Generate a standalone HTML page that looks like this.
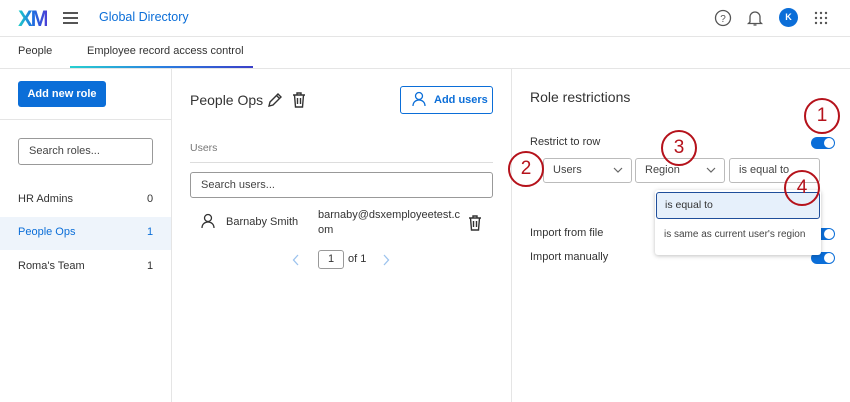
<!DOCTYPE html>
<html><head><style>
*{box-sizing:border-box;margin:0;padding:0}
body{width:850px;height:402px;overflow:hidden;background:#fff;font-family:"Liberation Sans",sans-serif;color:#333;position:relative;font-size:11px}
.a{position:absolute}
.inp{position:absolute;border:1px solid #999;border-radius:3px;background:#fff;color:#444}
.tog{position:absolute;width:24px;height:12px;border-radius:6px;background:#0b6ed8}
.tog:after{content:"";position:absolute;right:1px;top:1px;width:10px;height:10px;border-radius:50%;background:#fff}
.circ{position:absolute;width:36px;height:36px;border:2.5px solid #b5121b;border-radius:50%;background:transparent;color:#b5121b;font-size:19px;text-align:center;line-height:31px}
.sel{position:absolute;top:158px;height:25px;border:1px solid #bbb;border-radius:3px;background:#fff;font-size:11px;line-height:23px;padding-left:9px;color:#444}
.chev{position:absolute;right:8px;top:8px}
</style></head><body>
<div class="a" style="left:18px;top:6px;font-size:22px;font-weight:bold;letter-spacing:-2px;background:linear-gradient(90deg,#1fd1c8,#1d6fe0,#4b3fd6);-webkit-background-clip:text;color:transparent">XM</div>
<div class="a" style="left:63px;top:12px;width:15px;height:2px;background:#555;box-shadow:0 5px 0 #555,0 10px 0 #555"></div>
<div class="a" style="left:99px;top:10px;font-size:12.5px;color:#0b6ed8">Global Directory</div>
<svg class="a" style="left:714px;top:9px" width="18" height="18"><circle cx="9" cy="9" r="7.5" fill="none" stroke="#555" stroke-width="1.3"/><text x="9" y="13" font-size="10" text-anchor="middle" fill="#555" font-family="Liberation Sans">?</text></svg>
<svg class="a" style="left:746px;top:8px" width="18" height="20"><path d="M4 14V9a5 5 0 0 1 10 0v5l1.5 1.5h-13z M7.5 17h3" fill="none" stroke="#555" stroke-width="1.3"/></svg>
<div class="a" style="left:779px;top:8px;width:19px;height:19px;border-radius:50%;background:#0b6ed8;color:#fff;font-size:9px;font-weight:bold;text-align:center;line-height:19px">K</div>
<svg class="a" style="left:814px;top:11px" width="16" height="16" fill="#555"><circle cx="2" cy="2" r="1.2"/><circle cx="7" cy="2" r="1.2"/><circle cx="12" cy="2" r="1.2"/><circle cx="2" cy="7" r="1.2"/><circle cx="7" cy="7" r="1.2"/><circle cx="12" cy="7" r="1.2"/><circle cx="2" cy="12" r="1.2"/><circle cx="7" cy="12" r="1.2"/><circle cx="12" cy="12" r="1.2"/></svg>
<div class="a" style="left:0;top:36px;width:850px;height:1px;background:#e5e5e5"></div>
<div class="a" style="left:18px;top:45px;font-size:11px">People</div>
<div class="a" style="left:87px;top:45px;font-size:11px">Employee record access control</div>
<div class="a" style="left:70px;top:66px;width:183px;height:2px;background:linear-gradient(90deg,#27d0d0,#2a7fe0,#3a3fc8)"></div>
<div class="a" style="left:0;top:68px;width:850px;height:1px;background:#e5e5e5"></div>
<div class="a" style="left:171px;top:68px;width:1px;height:334px;background:#e5e5e5"></div>
<div class="a" style="left:511px;top:68px;width:1px;height:334px;background:#e5e5e5"></div>
<!-- left -->
<div class="a" style="left:18px;top:81px;width:88px;height:26px;background:#0b6ed8;border-radius:3px;color:#fff;font-size:11px;font-weight:bold;text-align:center;line-height:26px">Add new role</div>
<div class="a" style="left:0;top:119px;width:171px;height:1px;background:#e5e5e5"></div>
<div class="inp" style="left:18px;top:138px;width:135px;height:27px;padding-left:10px;line-height:25px;font-size:11px">Search roles...</div>
<div class="a" style="left:18px;top:193px">HR Admins</div><div class="a" style="left:147px;top:193px">0</div>
<div class="a" style="left:0;top:217px;width:171px;height:33px;background:#eef4fb"></div>
<div class="a" style="left:18px;top:226px;color:#0b6ed8">People Ops</div><div class="a" style="left:147px;top:226px;color:#0b6ed8">1</div>
<div class="a" style="left:18px;top:260px">Roma's Team</div><div class="a" style="left:147px;top:260px">1</div>
<!-- middle -->
<div class="a" style="left:190px;top:92px;font-size:14px;color:#333">People Ops</div>
<svg class="a" style="left:266px;top:91px" width="18" height="18"><path d="M3 15l1-4 8-8 3 3-8 8z M10.5 4.5l3 3" fill="none" stroke="#333" stroke-width="1.4"/></svg>
<svg class="a" style="left:291px;top:91px" width="16" height="18"><path d="M2 4h12 M6 4V2h4v2 M3.5 4l1 12h7l1-12 M6.5 7v6 M9.5 7v6" fill="none" stroke="#333" stroke-width="1.4"/></svg>
<div class="a" style="left:400px;top:86px;width:93px;height:28px;border:1px solid #0b6ed8;border-radius:3px;color:#0b6ed8;font-size:11px;font-weight:bold;line-height:26px;padding-left:33px">Add users</div>
<svg class="a" style="left:411px;top:91px" width="16" height="16"><circle cx="8" cy="5" r="3.5" fill="none" stroke="#0b6ed8" stroke-width="1.3"/><path d="M2 15c0-4 3-6 6-6s6 2 6 6" fill="none" stroke="#0b6ed8" stroke-width="1.3"/></svg>
<div class="a" style="left:190px;top:142px;font-size:10.5px;color:#777">Users</div>
<div class="a" style="left:190px;top:162px;width:303px;height:1px;background:#ddd"></div>
<div class="inp" style="left:190px;top:172px;width:303px;height:26px;padding-left:10px;line-height:24px;font-size:11px">Search users...</div>
<svg class="a" style="left:200px;top:213px" width="16" height="16"><circle cx="8" cy="5" r="3.5" fill="none" stroke="#333" stroke-width="1.3"/><path d="M2 15c0-4 3-6 6-6s6 2 6 6" fill="none" stroke="#333" stroke-width="1.3"/></svg>
<div class="a" style="left:226px;top:216px">Barnaby Smith</div>
<div class="a" style="left:318px;top:208px;line-height:15px;width:150px">barnaby@dsxemployeetest.c<br>om</div>
<svg class="a" style="left:467px;top:214px" width="16" height="18"><path d="M2 4h12 M6 4V2h4v2 M3.5 4l1 12h7l1-12 M6.5 7v6 M9.5 7v6" fill="none" stroke="#333" stroke-width="1.4"/></svg>
<svg class="a" style="left:292px;top:254px" width="8" height="12"><path d="M6 1L1.5 6 6 11" fill="none" stroke="#9cc3ee" stroke-width="1.3"/></svg>
<div class="inp" style="left:318px;top:250px;width:26px;height:19px;text-align:center;line-height:17px;font-size:11px;color:#333">1</div>
<div class="a" style="left:348px;top:253px">of 1</div>
<svg class="a" style="left:382px;top:254px" width="8" height="12"><path d="M2 1l4.5 5L2 11" fill="none" stroke="#9cc3ee" stroke-width="1.3"/></svg>
<!-- right -->
<div class="a" style="left:530px;top:89px;font-size:14px;color:#333">Role restrictions</div>
<div class="a" style="left:530px;top:136px">Restrict to row</div>
<div class="tog" style="left:811px;top:137px"></div>
<div class="sel" style="left:543px;width:89px">Users<svg class="chev" width="10" height="7"><path d="M1 1l4 4 4-4" fill="none" stroke="#666" stroke-width="1.2"/></svg></div>
<div class="sel" style="left:635px;width:90px">Region<svg class="chev" width="10" height="7"><path d="M1 1l4 4 4-4" fill="none" stroke="#666" stroke-width="1.2"/></svg></div>
<div class="sel" style="left:729px;width:91px">is equal to</div>
<div class="a" style="left:530px;top:227px">Import from file</div>
<div class="tog" style="left:811px;top:228px"></div>
<div class="a" style="left:530px;top:251px">Import manually</div>
<div class="tog" style="left:811px;top:252px"></div>
<div class="a" style="left:655px;top:190px;width:166px;height:65px;background:#fff;box-shadow:0 1px 4px rgba(0,0,0,.25);border-radius:3px"></div>
<div class="a" style="left:656px;top:192px;width:164px;height:27px;background:#e6f0fb;border:1.5px solid #1f4e9a;border-radius:3px;font-size:10.5px;line-height:24px;padding-left:8px;color:#333">is equal to</div>
<div class="a" style="left:664px;top:229px;font-size:10px;color:#444">is same as current user's region</div>
<div class="circ" style="left:804px;top:98px">1</div>
<div class="circ" style="left:508px;top:151px">2</div>
<div class="circ" style="left:661px;top:130px">3</div>
<div class="circ" style="left:784px;top:170px">4</div>
</body></html>
